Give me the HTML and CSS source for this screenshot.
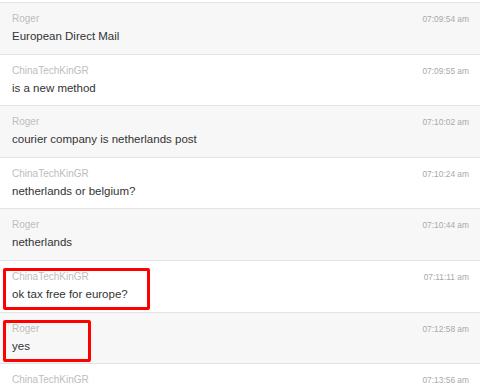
FILE: index.html
```html
<!DOCTYPE html>
<html lang="en">
<head>
  <meta charset="UTF-8">
  <title>Chat log</title>
  <link rel="stylesheet" href="styles.css">
</head>
<body>

<div class="chat">
  <div class="msg odd">
    <div class="meta"><span class="nome">Roger</span><span class="hora">07:09:54 am</span></div>
    <div class="texto">European Direct Mail</div>
  </div>
  <div class="msg">
    <div class="meta"><span class="nome">ChinaTechKinGR</span><span class="hora">07:09:55 am</span></div>
    <div class="texto">is a new method</div>
  </div>
  <div class="msg odd">
    <div class="meta"><span class="nome">Roger</span><span class="hora">07:10:02 am</span></div>
    <div class="texto">courier company is netherlands post</div>
  </div>
  <div class="msg">
    <div class="meta"><span class="nome">ChinaTechKinGR</span><span class="hora">07:10:24 am</span></div>
    <div class="texto">netherlands or belgium?</div>
  </div>
  <div class="msg odd">
    <div class="meta"><span class="nome">Roger</span><span class="hora">07:10:44 am</span></div>
    <div class="texto">netherlands</div>
  </div>
  <div class="msg">
    <div class="marca marca-1"></div>
    <div class="meta"><span class="nome">ChinaTechKinGR</span><span class="hora">07:11:11 am</span></div>
    <div class="texto">ok tax free for europe?</div>
  </div>
  <div class="msg odd">
    <div class="marca marca-2"></div>
    <div class="meta"><span class="nome">Roger</span><span class="hora">07:12:58 am</span></div>
    <div class="texto">yes</div>
  </div>
  <div class="msg">
    <div class="meta"><span class="nome">ChinaTechKinGR</span><span class="hora">07:13:56 am</span></div>
    <div class="texto"></div>
  </div>
</div>

</body>
</html>
```

FILE: styles.css
```css
body {
  margin: 0;
  padding: 0;
  background: white;
  font-family: "Liberation Sans", Arial, sans-serif;
  overflow: hidden;
}
.chat {
  padding-top: 2px;
}
.msg {
  position: relative;
  box-sizing: border-box;
  height: 51.6px;
  border-top: 1px solid #e3e3e3;
  padding: 9px 11px 0 12px;
  background: white;
}
.msg.odd {
  background: #f7f7f7;
}
.meta {
  display: flex;
  justify-content: space-between;
  align-items: baseline;
  height: 18px;
}
.nome {
  font-size: 10px;
  color: #bdbdbd;
}
.hora {
  font-size: 8.4px;
  color: #a9a9a9;
  padding-top: 2px;
}
.texto {
  font-size: 11.5px;
  color: #333;
}
.marca {
  position: absolute;
  border: 3px solid #f00;
  border-radius: 2px;
  box-sizing: border-box;
}
.marca-1 {
  left: 3px;
  top: 7px;
  width: 147px;
  height: 42px;
}
.marca-2 {
  left: 3px;
  top: 7px;
  width: 88px;
  height: 42px;
}
```
